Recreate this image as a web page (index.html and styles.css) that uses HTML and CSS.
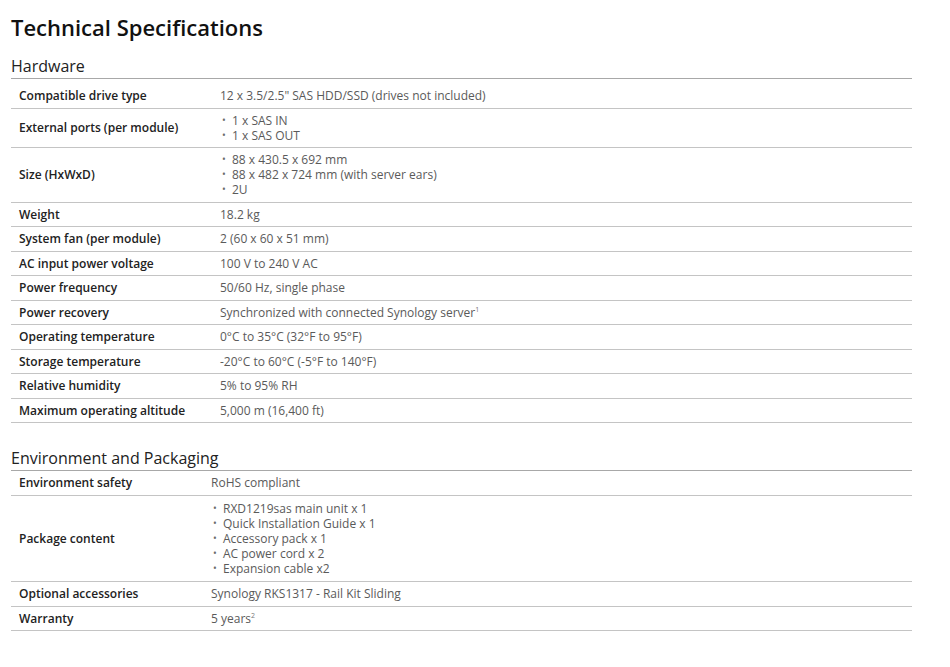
FILE: index.html
```html
<!DOCTYPE html>
<html lang="en">
<head>
<meta charset="utf-8">
<title>Technical Specifications</title>
<link rel="stylesheet" href="styles.css">
</head>
<body>
<main class="page">
  <h1 class="title">Technical Specifications</h1>

  <section class="spec spec--hw">
    <h2 class="spec-heading">Hardware</h2>
    <table class="spec-table">
      <colgroup><col class="col-label"><col></colgroup>
      <tbody>
        <tr class="row"><th>Compatible drive type</th><td>12 x 3.5/2.5" SAS HDD/SSD (drives not included)</td></tr>
        <tr class="row"><th>External ports (per module)</th><td><ul class="bullets"><li>1 x SAS IN</li><li>1 x SAS OUT</li></ul></td></tr>
        <tr class="row"><th>Size (HxWxD)</th><td><ul class="bullets"><li>88 x 430.5 x 692 mm</li><li>88 x 482 x 724 mm (with server ears)</li><li>2U</li></ul></td></tr>
        <tr class="row"><th>Weight</th><td>18.2 kg</td></tr>
        <tr class="row"><th>System fan (per module)</th><td>2 (60 x 60 x 51 mm)</td></tr>
        <tr class="row"><th>AC input power voltage</th><td>100 V to 240 V AC</td></tr>
        <tr class="row"><th>Power frequency</th><td>50/60 Hz, single phase</td></tr>
        <tr class="row"><th>Power recovery</th><td>Synchronized with connected Synology server<sup class="note">1</sup></td></tr>
        <tr class="row"><th>Operating temperature</th><td>0°C to 35°C (32°F to 95°F)</td></tr>
        <tr class="row"><th>Storage temperature</th><td>-20°C to 60°C (-5°F to 140°F)</td></tr>
        <tr class="row"><th>Relative humidity</th><td>5% to 95% RH</td></tr>
        <tr class="row"><th>Maximum operating altitude</th><td>5,000 m (16,400 ft)</td></tr>
      </tbody>
    </table>
  </section>

  <section class="spec spec--env">
    <h2 class="spec-heading">Environment and Packaging</h2>
    <table class="spec-table">
      <colgroup><col class="col-label"><col></colgroup>
      <tbody>
        <tr class="row"><th>Environment safety</th><td>RoHS compliant</td></tr>
        <tr class="row"><th>Package content</th><td><ul class="bullets bullets--spaced"><li>RXD1219sas main unit x 1</li><li>Quick Installation Guide x 1</li><li>Accessory pack x 1</li><li>AC power cord x 2</li><li>Expansion cable x2</li></ul></td></tr>
        <tr class="row"><th>Optional accessories</th><td>Synology RKS1317 - Rail Kit Sliding</td></tr>
        <tr class="row"><th>Warranty</th><td>5 years<sup class="note">2</sup></td></tr>
      </tbody>
    </table>
  </section>
</main>
</body>
</html>
```

FILE: styles.css
```css
* { box-sizing: border-box; }

html, body {
  margin: 0;
  padding: 0;
  background: #ffffff;
}

body {
  font-family: "Open Sans", "Noto Sans", "Liberation Sans", sans-serif;
  color: #222222;
}

.page {
  width: 912px;
  padding: 11px 0 0 11px;
}

.title {
  margin: 0;
  font-size: 22px;
  line-height: 32px;
  font-weight: 600;
  color: #111111;
}

.spec-heading {
  margin: 12px 0 0;
  padding-bottom: 1px;
  font-size: 16px;
  line-height: 22px;
  font-weight: 400;
  color: #222222;
  border-bottom: 1px solid #a8a8a8;
}

.spec--env {
  margin-top: 24px;
}

.spec--env .spec-heading {
  margin-top: 0;
}

.spec-table {
  width: 100%;
  table-layout: fixed;
  border-collapse: collapse;
  font-size: 12px;
  line-height: 15px;
}

.spec--hw .spec-table {
  margin-top: 5px;
}

.spec--hw .col-label { width: 201px; }
.spec--env .col-label { width: 192px; }

.row th,
.row td {
  padding: 4px 8px 4.5px;
  text-align: left;
  vertical-align: middle;
  border-bottom: 1px solid #c4c4c4;
}

.row th {
  font-weight: 600;
  color: #222222;
}

.row td {
  color: #5a5a5a;
}

.bullets {
  list-style: none;
  margin: 0;
  padding: 0 0 0 2px;
}

.bullets--spaced {
  padding-top: 1px;
  padding-bottom: 1px;
}

.bullets li::before {
  content: "•";
  display: inline-block;
  width: 10px;
  font-size: 10px;
  color: #6a6a6a;
  vertical-align: top;
}

.note {
  font-size: 7px;
  line-height: 0;
  vertical-align: 5px;
  color: #777777;
}
```
